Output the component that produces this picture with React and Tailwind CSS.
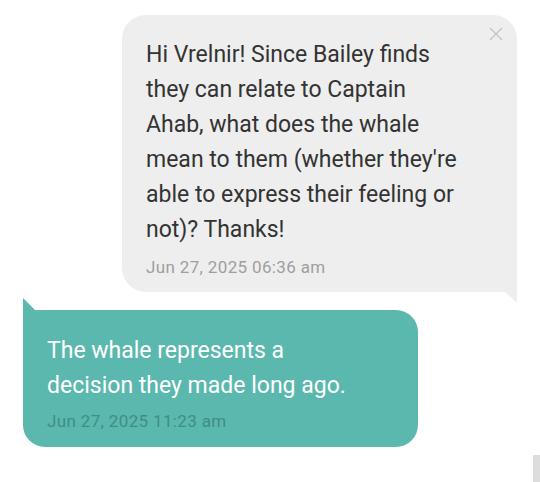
export default function App() {
  return (
    <div className="relative h-[482px] w-[540px] overflow-hidden bg-white font-['Roboto',sans-serif]">
      <div className="flex flex-col pt-[15px]">
        {/* incoming message */}
        <div className="relative ml-auto mr-[23px] w-[395px] rounded-[24px] rounded-br-none bg-[#eeeeee] pb-[15px] pl-6 pr-[52px] pt-[22px]">
          <button className="absolute right-[14px] top-[12px] text-[#c4c4c4]">
            <svg width="14" height="14" viewBox="0 0 14 14" stroke="currentColor" strokeWidth="1.4">
              <path d="M1 1L13 13M13 1L1 13" />
            </svg>
          </button>
          <p className="text-[23px] leading-[35px] text-[#333333]">
            Hi Vrelnir! Since Bailey finds they can relate to Captain Ahab, what does the whale mean to them (whether they're able to express their feeling or not)? Thanks!
          </p>
          <p className="mt-[10px] text-[17px] leading-[20px] tracking-[0.35px] text-[#9e9e9e]">Jun 27, 2025 06:36 am</p>
          <svg className="absolute right-0 top-full" width="12" height="11" viewBox="0 0 12 11">
            <path d="M0 0H12V11Z" fill="#eeeeee" />
          </svg>
        </div>

        {/* reply */}
        <div className="relative ml-[23px] mt-[18px] w-[395px] rounded-[22px] rounded-tl-none bg-[#5bb8ae] pb-[16px] pl-6 pr-[52px] pt-[23px]">
          <svg className="absolute bottom-full left-0" width="12" height="12" viewBox="0 0 12 12">
            <path d="M0 0L12 12H0Z" fill="#5bb8ae" />
          </svg>
          <p className="text-[23px] leading-[35px] text-white">
            The whale represents a decision they made long ago.
          </p>
          <p className="mt-[8px] text-[17px] leading-[20px] tracking-[0.35px] text-[#3f8e85]">Jun 27, 2025 11:23 am</p>
        </div>
      </div>
      <div className="absolute bottom-0 right-0 h-[27px] w-[7px] bg-[#dddddd]" />
    </div>
  )
}
